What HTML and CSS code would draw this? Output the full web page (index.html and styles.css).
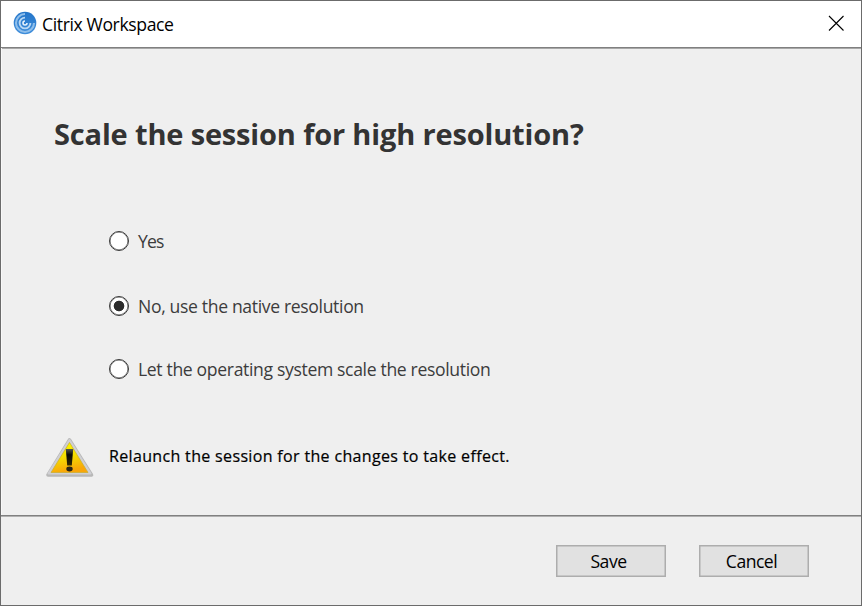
FILE: index.html
```html
<!DOCTYPE html>
<html lang="en">
<head>
<meta charset="utf-8">
<title>Citrix Workspace</title>
<link rel="stylesheet" href="styles.css">
</head>
<body>
<div class="window">
  <header class="titlebar">
    <svg class="logo" viewBox="0 0 24 24" fill="none">
      <defs><linearGradient id="blue" x1="0" y1="0" x2="0" y2="1"><stop stop-color="#2475c9"/><stop offset="1" stop-color="#3f8edb"/></linearGradient></defs>
      <circle cx="12" cy="12" r="11.3" fill="url(#blue)"/>
      <path d="M12 3A9 9 0 1 0 21 12" stroke="#8fbfeb" stroke-width="2.1"/>
      <path d="M12 6.6A5.4 5.4 0 1 0 17.4 12" stroke="#b9d8f4" stroke-width="1.9"/>
      <path d="M12 10A2 2 0 1 0 14 12" stroke="#e5f1fc" stroke-width="1.6"/>
    </svg>
    <span class="caption">Citrix Workspace</span>
    <button class="close" aria-label="Close"><svg viewBox="0 0 16 16"><path d="M1 1l14.5 14.5M15.5 1L1 15.5" stroke="#000" stroke-width="1.1"/></svg></button>
  </header>
  <main class="content">
    <h1 class="heading">Scale the session for high resolution?</h1>
    <div class="options">
      <label class="option"><input type="radio" name="scale"><span class="yes">Yes</span></label>
      <label class="option"><input type="radio" name="scale" checked><span class="native">No, use the native resolution</span></label>
      <label class="option"><input type="radio" name="scale"><span class="system">Let the operating system scale the resolution</span></label>
    </div>
    <div class="notice">
      <svg class="warning" viewBox="0 0 50 42">
        <defs>
          <linearGradient id="amber" x1="0" y1="0" x2=".25" y2="1"><stop stop-color="#ffff00"/><stop offset=".55" stop-color="#f4dc00"/><stop offset="1" stop-color="#f9a609"/></linearGradient>
          <linearGradient id="mark" x1="0" y1="0" x2="0" y2="1"><stop stop-color="#55574a"/><stop offset=".35" stop-color="#080808"/><stop offset="1" stop-color="#302800"/></linearGradient>
        </defs>
        <path d="M24.5 3L46.5 38H3z" fill="#b8b8b8" stroke="#b8b8b8" stroke-width="3.6" stroke-linejoin="round"/>
        <path d="M24.5 3L45.5 36.5H3.5z" fill="#d0d0d4" stroke="#d0d0d4" stroke-width="2" stroke-linejoin="round"/>
        <path d="M24.5 5.5L43 35.5H6z" fill="url(#amber)" stroke="#c8ad2c" stroke-width=".7" stroke-linejoin="round"/>
        <path d="M20.8 12h7.4l-1.4 16.5h-4.6z" fill="url(#mark)"/>
        <ellipse cx="24.5" cy="32" rx="3.2" ry="2.4" fill="#282417"/>
      </svg>
      <p class="message">Relaunch the session for the changes to take effect.</p>
    </div>
  </main>
  <footer class="actions">
    <button class="action save">Save</button>
    <button class="action cancel">Cancel</button>
  </footer>
</div>
</body>
</html>
```
FILE: styles.css
```css
* { box-sizing: border-box; }
body { margin: 0; font-family: "Open Sans", "Noto Sans", sans-serif; }
.window { width: 862px; height: 606px; display: flex; flex-direction: column; border: 1px solid #6b6b6b; background: #efefef; }
.titlebar { height: 47px; flex: none; display: flex; align-items: center; padding: 0 17px 2px 12px; background: #fff; border-bottom: 1px solid #808080; box-shadow: 0 1px #a8a8a8; }
.logo { width: 24px; height: 24px; flex: none; }
.caption { margin-left: 5px; margin-top: 2px; font-size: 17.6px; letter-spacing: -.38px; line-height: 24px; color: #000; white-space: nowrap; }
.close { margin-left: auto; width: 16px; height: 16px; padding: 0; border: 0; background: none; }
.close svg { display: block; width: 16px; height: 16px; }
.content { flex: 1; border-left: 1px solid #f8f8f8; }
.heading { margin: 65px 0 0 52px; font-size: 29px; font-weight: 700; letter-spacing: -.16px; line-height: 42px; color: #333; white-space: nowrap; }
.options { margin: 74px 0 0 107px; display: grid; grid-template-rows: 65px 63px 24px; }
.option { display: flex; align-items: center; height: 24px; font-size: 17.6px; letter-spacing: -.35px; line-height: 24px; color: #3c3c3c; white-space: nowrap; }
.option input { appearance: none; flex: none; width: 20px; height: 20px; margin: 0 9px 0 0; border: 1.5px solid #3a3a3a; border-radius: 50%; background: #fff; box-shadow: inset 0 0 0 .5px #555; }
.option .yes { letter-spacing: -.8px; }
.option input:checked { background: radial-gradient(circle, #2c2c2c 0 4.9px, #fff 5.7px); }
.notice { display: flex; align-items: center; margin: 56px 0 0 43px; }
.warning { width: 50px; height: 42px; flex: none; }
.message { margin: -4px 0 0 14px; font-size: 16px; letter-spacing: .34px; line-height: 24px; color: #000; white-space: nowrap; -webkit-text-stroke: .2px #000; }
.actions { height: 90px; flex: none; display: flex; justify-content: flex-end; gap: 33px; padding: 29px 52px 0 0; border-top: 1px solid #808080; box-shadow: inset 0 1px #b0b0b0; }
.action { width: 110px; height: 32px; padding: 0 5px 0 0; border: 1px solid #adadad; box-shadow: inset 0 0 0 .5px #adadad; background: #e1e1e1; font: 17.6px/24px "Open Sans", sans-serif; letter-spacing: -.5px; color: #000; }
```
